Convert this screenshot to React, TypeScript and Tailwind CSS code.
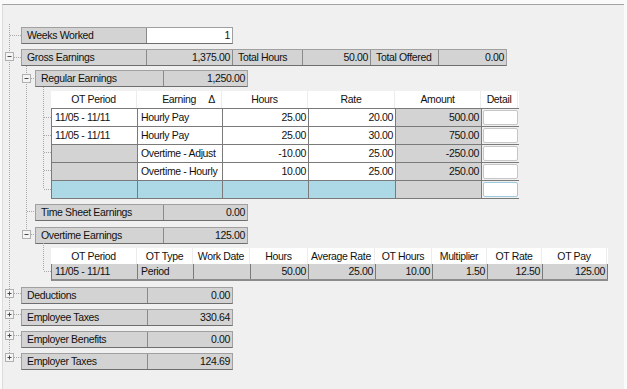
import React from 'react';

type Cell = { w: number; text?: string; right?: boolean; white?: boolean };

function FieldRow({ cells, indent, mt }: { cells: Cell[]; indent: string; mt: string }) {
  return (
    <div className={`flex h-[17px] w-fit border border-[#a0a0a0] border-b-[#6e6e6e] ${indent} ${mt}`}>
      {cells.map((c, i) => (
        <div
          key={i}
          style={{ width: c.w }}
          className={`h-full truncate leading-[15px] ${c.white ? 'bg-white' : 'bg-[#d3d3d3]'} ${
            c.right ? 'pr-[2px] text-right' : 'pl-[5px]'
          } ${i < cells.length - 1 ? 'border-r border-[#8a8a8a]' : ''}`}
        >
          {c.text}
        </div>
      ))}
    </div>
  );
}

const earnCols = [86, 85, 86, 87, 86, 37];
const earnRows: { cells: string[]; kind: 'normal' | 'nodate' | 'new' }[] = [
  { cells: ['11/05 - 11/11', 'Hourly Pay', '25.00', '20.00', '500.00'], kind: 'normal' },
  { cells: ['11/05 - 11/11', 'Hourly Pay', '25.00', '30.00', '750.00'], kind: 'normal' },
  { cells: ['', 'Overtime - Adjust', '-10.00', '25.00', '-250.00'], kind: 'nodate' },
  { cells: ['', 'Overtime - Hourly', '10.00', '25.00', '250.00'], kind: 'nodate' },
  { cells: ['', '', '', '', ''], kind: 'new' },
];

const otCols = [86, 56, 57, 58, 67, 57, 55, 55, 65];
const otHeaders = ['OT Period', 'OT Type', 'Work Date', 'Hours', 'Average Rate', 'OT Hours', 'Multiplier', 'OT Rate', 'OT Pay'];
const otRow = ['11/05 - 11/11', 'Period', '', '50.00', '25.00', '10.00', '1.50', '12.50', '125.00'];

function EarningsGrid() {
  const headers = ['OT Period', 'Earning', 'Hours', 'Rate', 'Amount', 'Detail'];
  return (
    <div className="ml-[48px] mt-[4px] w-fit">
      <div className="flex h-[17px] bg-white">
        {headers.map((h, i) => (
          <div
            key={h}
            style={{ width: earnCols[i] }}
            className="relative h-full border-r border-[#ececec] text-center leading-[17px]"
          >
            {h}
            {h === 'Earning' && <span className="absolute right-[6px] top-0">Δ</span>}
          </div>
        ))}
      </div>
      <div className="border-l border-t border-[#7a7a7a]">
        {earnRows.map((r, ri) => (
          <div key={ri} className="flex h-[18px] border-b border-[#7a7a7a]">
            {r.cells.map((t, ci) => {
              let bg = 'bg-white';
              if (ci === 4) bg = 'bg-[#d3d3d3]';
              else if (r.kind === 'new') bg = 'bg-[#add8e6]';
              else if (ci === 0 && r.kind === 'nodate') bg = 'bg-[#d3d3d3]';
              const right = ci >= 2;
              return (
                <div
                  key={ci}
                  style={{ width: earnCols[ci] }}
                  className={`h-full border-r border-[#7a7a7a] leading-[16px] ${bg} ${
                    right ? 'pr-[2px] text-right' : 'pl-[3px]'
                  }`}
                >
                  {t}
                </div>
              );
            })}
            <div style={{ width: earnCols[5] }} className="h-full bg-[#f0f0f0] p-[1px]">
              <div
                className={`h-full rounded-[2px] border bg-white ${
                  r.kind === 'new' ? 'border-[#9ccbe0]' : 'border-[#c6c6c6]'
                }`}
              />
            </div>
          </div>
        ))}
      </div>
    </div>
  );
}

function OvertimeGrid() {
  return (
    <div className="ml-[48px] mt-[4px] w-fit">
      <div className="flex h-[16px] bg-white">
        {otHeaders.map((h, i) => (
          <div
            key={h}
            style={{ width: otCols[i] }}
            className="h-full border-r border-[#ececec] text-center leading-[16px]"
          >
            {h}
          </div>
        ))}
      </div>
      <div className="flex h-[17px] border-l border-b-2 border-[#7a7a7a] border-b-[#8c8c8c] bg-[#d3d3d3]">
        {otRow.map((t, i) => (
          <div
            key={i}
            style={{ width: otCols[i] }}
            className={`h-full border-r border-[#7a7a7a] leading-[15px] ${
              i >= 3 ? 'pr-[2px] text-right' : 'pl-[3px]'
            }`}
          >
            {t}
          </div>
        ))}
      </div>
    </div>
  );
}

function Toggle({ x, y, open }: { x: number; y: number; open: boolean }) {
  return (
    <g>
      <rect x={x + 0.5} y={y + 0.5} width={8} height={8} fill="#f4f4f4" stroke="#b0b0b0" />
      <line x1={x + 2.5} y1={y + 4.5} x2={x + 6.5} y2={y + 4.5} stroke="#4a4a4a" />
      {!open && <line x1={x + 4.5} y1={y + 2.5} x2={x + 4.5} y2={y + 6.5} stroke="#4a4a4a" />}
    </g>
  );
}

function TreeLines() {
  const dot = { stroke: '#a8a8a8', strokeDasharray: '1 1', strokeWidth: 1 };
  const h = (x1: number, x2: number, y: number) => (
    <line key={`h${x1}-${y}`} x1={x1} y1={y + 0.5} x2={x2} y2={y + 0.5} {...dot} />
  );
  const v = (x: number, y1: number, y2: number) => (
    <line key={`v${x}-${y1}`} x1={x + 0.5} y1={y1} x2={x + 0.5} y2={y2} {...dot} />
  );
  return (
    <svg className="pointer-events-none absolute left-0 top-0" width={627} height={389}>
      {v(9, 24, 358)}
      {h(10, 21, 35)}
      {h(14, 21, 57)}
      {h(14, 21, 293)}
      {h(14, 21, 314)}
      {h(14, 21, 335)}
      {h(14, 21, 357)}
      {v(26, 66, 234)}
      {h(31, 35, 78)}
      {h(27, 35, 211)}
      {h(31, 35, 234)}
      {v(43, 87, 189)}
      {h(44, 51, 117)}
      {h(44, 51, 135)}
      {h(44, 51, 152)}
      {h(44, 51, 170)}
      {h(44, 51, 189)}
      {v(43, 243, 271)}
      {h(44, 51, 271)}
      <Toggle x={5} y={52} open />
      <Toggle x={22} y={74} open />
      <Toggle x={22} y={230} open />
      <Toggle x={5} y={289} open={false} />
      <Toggle x={5} y={310} open={false} />
      <Toggle x={5} y={331} open={false} />
      <Toggle x={5} y={353} open={false} />
    </svg>
  );
}

export default function App() {
  return (
    <div className="relative h-[389px] w-[627px] overflow-hidden bg-[#fafafa] font-['Liberation_Sans',Arial,sans-serif] text-[10.5px] tracking-[-0.35px] text-[#111]">
      <div className="ml-[2px] mt-[4px] h-[385px] w-[622px] border-l border-t border-[#a3a3a3] border-l-[#dcdcdc] bg-[#f0f0f0] pt-[22px]">
        <FieldRow
          indent="ml-[18px]"
          mt="mt-0"
          cells={[
            { w: 125, text: 'Weeks Worked' },
            { w: 85, text: '1', right: true, white: true },
          ]}
        />
        <FieldRow
          indent="ml-[18px]"
          mt="mt-[5px]"
          cells={[
            { w: 125, text: 'Gross Earnings' },
            { w: 86, text: '1,375.00', right: true },
            { w: 70, text: 'Total Hours' },
            { w: 68, text: '50.00', right: true },
            { w: 68, text: 'Total Offered' },
            { w: 67, text: '0.00', right: true },
          ]}
        />
        <FieldRow
          indent="ml-[32px]"
          mt="mt-[4px]"
          cells={[
            { w: 128, text: 'Regular Earnings' },
            { w: 83, text: '1,250.00', right: true },
          ]}
        />
        <EarningsGrid />
        <FieldRow
          indent="ml-[32px]"
          mt="mt-[5px]"
          cells={[
            { w: 128, text: 'Time Sheet Earnings' },
            { w: 83, text: '0.00', right: true },
          ]}
        />
        <FieldRow
          indent="ml-[32px]"
          mt="mt-[6px]"
          cells={[
            { w: 128, text: 'Overtime Earnings' },
            { w: 83, text: '125.00', right: true },
          ]}
        />
        <OvertimeGrid />
        {[
          ['Deductions', '0.00', 'mt-[6px]'],
          ['Employee Taxes', '330.64', 'mt-[5px]'],
          ['Employer Benefits', '0.00', 'mt-[5px]'],
          ['Employer Taxes', '124.69', 'mt-[5px]'],
        ].map(([label, val, mt]) => (
          <FieldRow
            key={label}
            indent="ml-[18px]"
            mt={mt}
            cells={[
              { w: 126, text: label },
              { w: 84, text: val, right: true },
            ]}
          />
        ))}
      </div>
      <TreeLines />
    </div>
  );
}
